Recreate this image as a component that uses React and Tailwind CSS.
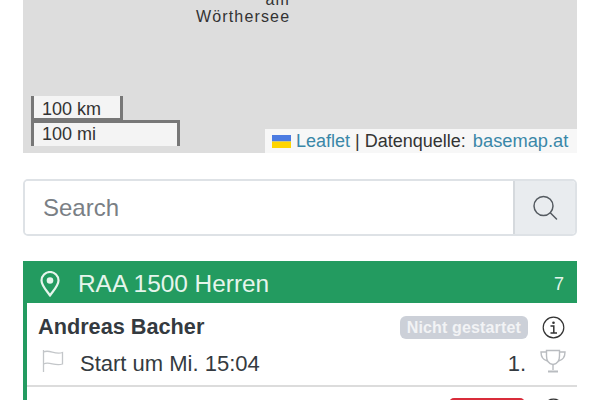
export default function App() {
  return (
    <div className="h-[400px] w-[600px] overflow-hidden bg-white px-[23px] font-['Liberation_Sans',Arial,sans-serif]">
      <div className="relative h-[153px] w-full overflow-hidden bg-[#dddddd]">
        <div className="absolute left-[173px] top-[-9px] w-[94px] text-right text-[16px] leading-[17px] tracking-[1.15px] text-[#333]">
          <div>am</div>
          <div>Wörthersee</div>
        </div>
        <div className="absolute bottom-[7px] left-[8px] flex flex-col items-start text-[#333]">
          <div className="h-[25px] w-[92px] border-x-[3px] border-b-[3px] border-[#777] bg-[#f4f4f4] pl-[8px] text-[18px] leading-[26px]">100 km</div>
          <div className="mt-[-1px] h-[26px] w-[149px] border-x-[3px] border-t-[3px] border-[#777] bg-[#f4f4f4] pl-[8px] text-[18px] leading-[23px]">100 mi</div>
        </div>
        <div className="absolute bottom-0 right-0 flex h-[24px] w-[312px] items-center bg-[#f7f7f7] pl-[7px] text-[18px] text-[#333]">
          <svg width="19" height="13" viewBox="0 0 19 13" className="mr-[5px] shrink-0">
            <rect width="19" height="6.5" fill="#4C7BE1" />
            <rect y="6.5" width="19" height="6.5" fill="#FFD500" />
          </svg>
          <span className="text-[#3a87a8]">Leaflet</span>
          <span className="mx-[5px]">|</span>
          <span>Datenquelle:&nbsp;</span>
          <span className="ml-[2px] text-[18.3px] text-[#3a87a8]">basemap.at</span>
        </div>
      </div>

      <div className="mt-[26px] flex h-[57px] overflow-hidden rounded-[5px] border-2 border-[#dee2e6]">
        <div className="flex flex-1 items-center bg-white pl-[18px] text-[24px] text-[#7a7f85]">Search</div>
        <div className="flex w-[62px] items-center justify-center border-l-2 border-[#d5d9dd] bg-[#e9ecef]">
          <svg width="28" height="28" viewBox="0 0 28 28" fill="none" stroke="#555b61" strokeWidth="1.5" strokeLinecap="round">
            <circle cx="12.5" cy="12" r="9.5" />
            <path d="M19.5 19l6 6" />
          </svg>
        </div>
      </div>

      <div className="mt-[25px] border-l-[4px] border-[#239b60]">
        <div className="ml-[-4px] flex h-[42px] items-center bg-[#239b60] pl-[17px] pr-[13px] pt-[5px] text-[#e6f5ec]">
          <svg width="20" height="26" viewBox="0 0 20 26" fill="none" stroke="currentColor" strokeWidth="2.2" className="shrink-0 -translate-y-[1px]">
            <path d="M10 24.5C6.5 19.5 1.5 14.5 1.5 9.5a8.5 8.5 0 0 1 17 0c0 5-5 10-8.500 15z" strokeLinejoin="round" />
            <circle cx="10" cy="9.500" r="3.300" fill="currentColor" stroke="none" />
          </svg>
          <span className="ml-[18px] flex-1 text-[24.4px]">RAA 1500 Herren</span>
          <span className="text-[18px]">7</span>
        </div>

        <div className="relative h-[84px] border-b-[2px] border-[#dcdcdc] pl-[11px] pr-0 text-[#343a40]">
          <div className="flex h-[48px] items-center pr-[12px]">
            <span className="flex-1 text-[21.7px] font-bold leading-none">Andreas Bacher</span>
            <span className="rounded-[6px] bg-[#ccd0d8] px-[7px] text-[16px] font-bold leading-[23px] tracking-[0.15px] text-[#f2f3f5]">Nicht gestartet</span>
            <svg width="23" height="23" viewBox="0 0 23 23" fill="none" className="ml-[14px] shrink-0" stroke="#333">
              <circle cx="11.5" cy="11.500" r="10.300" strokeWidth="1.200" />
              <circle cx="11.500" cy="6.700" r="1.300" fill="#333" stroke="none" />
              <path d="M8.500 10h3.300v6.500M8.500 17h6.500" strokeWidth="1.500" />
            </svg>
          </div>
          <div className="flex h-[24px] items-center pr-[11px]">
            <svg width="24" height="24" viewBox="0 0 24 24" fill="none" stroke="#c3c6c9" strokeWidth="1.300" className="ml-[3px] shrink-0 -translate-y-[2px]">
              <path d="M2.500 1v22" />
              <path d="M2.500 3c6-3 11 3 19 .5V15c-8 2.500-13-3-19 0" />
            </svg>
            <span className="ml-[15px] flex-1 text-[22px]">Start um Mi. 15:04</span>
            <span className="text-[22px]">1.</span>
            <svg width="26" height="24" viewBox="0 0 26 24" fill="none" stroke="#b9bcc0" strokeWidth="1.400" className="ml-[14px] shrink-0 -translate-y-[2px]">
              <path d="M6.500 1.500h13V7c0 5-2.500 8-6.500 8.500C9 15 6.500 12 6.500 7z" />
              <path d="M6.500 3H1c0 5 2 8 6.500 9M19.500 3H25c0 5-2 8-6.500 9" />
              <path d="M13 15.500V21" />
              <path d="M8 22.500h10" strokeWidth="2" />
            </svg>
          </div>
        </div>
        <div className="relative h-[40px] pr-[12px]">
          <div className="absolute right-[52px] top-[11px] h-[20px] w-[76px] rounded-[5px] bg-[#d92c3a]" />
          <svg width="23" height="23" viewBox="0 0 23 23" fill="none" stroke="#333" className="absolute right-[12px] top-[11px]">
            <circle cx="11.500" cy="11.500" r="10.300" strokeWidth="1.200" />
          </svg>
        </div>
      </div>
    </div>
  );
}
